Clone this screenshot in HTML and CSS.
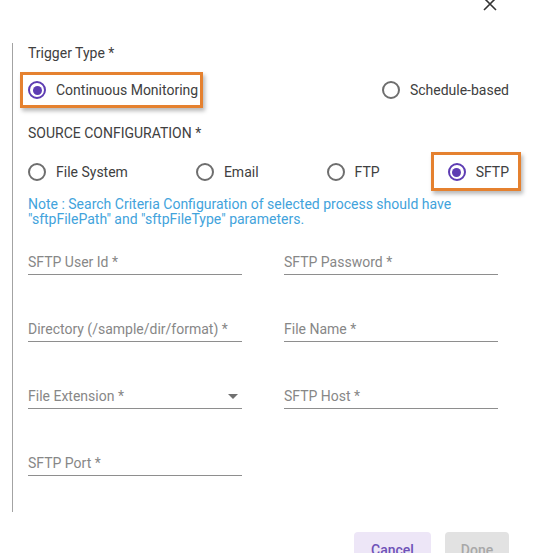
FILE: index.html
```html
<!DOCTYPE html>
<html>
<head>
<meta charset="utf-8">
<link rel="stylesheet" href="styles.css">
</head>
<body>
<div class="dialog">
  <div class="topbar">
    <button class="close" aria-label="Close">
      <svg width="14" height="14" viewBox="0 0 14 14"><path d="M1 1 L13 13 M13 1 L1 13" stroke="#333" stroke-width="1.6" fill="none"/></svg>
    </button>
  </div>
  <div class="content">
    <div class="group-label">Trigger Type *</div>
    <div class="trigger-row">
      <label class="radio checked hl hl-cm"><span class="circle"></span><span class="text">Continuous Monitoring</span></label>
      <label class="radio"><span class="circle"></span><span class="text">Schedule-based</span></label>
    </div>
    <div class="group-label section">SOURCE CONFIGURATION *</div>
    <div class="source-row">
      <label class="radio"><span class="circle"></span><span class="text">File System</span></label>
      <label class="radio"><span class="circle"></span><span class="text">Email</span></label>
      <label class="radio"><span class="circle"></span><span class="text">FTP</span></label>
      <label class="radio checked hl hl-sftp"><span class="circle"></span><span class="text">SFTP</span></label>
    </div>
    <p class="note">Note : Search Criteria Configuration of selected process should have<br>"sftpFilePath" and "sftpFileType" parameters.</p>
    <div class="fields">
      <div class="field"><span class="placeholder">SFTP User Id *</span></div>
      <div class="field"><span class="placeholder">SFTP Password *</span></div>
      <div class="field"><span class="placeholder">Directory (/sample/dir/format) *</span></div>
      <div class="field"><span class="placeholder">File Name *</span></div>
      <div class="field select"><span class="placeholder">File Extension *</span><span class="arrow"></span></div>
      <div class="field"><span class="placeholder">SFTP Host *</span></div>
      <div class="field"><span class="placeholder">SFTP Port *</span></div>
    </div>
  </div>
  <div class="actions">
    <button class="btn cancel">Cancel</button>
    <button class="btn done" disabled>Done</button>
  </div>
</div>
</body>
</html>
```

FILE: styles.css
```css
html, body {
  margin: 0;
  padding: 0;
  background: #ffffff;
  overflow: hidden;
  height: 553px;
}
body {
  font-family: Roboto, "Liberation Sans", Arial, sans-serif;
  font-size: 14px;
  color: #3a3a3a;
}
.dialog {
  width: 542px;
}
.topbar {
  height: 45px;
  display: flex;
  justify-content: flex-end;
  padding-right: 45px;
}
.close {
  border: none;
  background: none;
  padding: 0;
  margin-top: -3px;
  width: 14px;
  height: 14px;
  display: block;
}
.close svg { display: block; }
.content {
  margin-left: 12px;
  border-left: 1px solid #a3a3a3;
  padding-left: 15px;
  width: 481px;
  height: 469px;
  box-sizing: content-box;
}
.group-label {
  line-height: 20px;
  margin-top: -2px;
  color: #404040;
}
.group-label.section {
  margin-top: 13px;
}
.trigger-row {
  margin-top: 7px;
  height: 40px;
  display: flex;
  justify-content: space-between;
  align-items: center;
}
.source-row {
  margin-top: 9px;
  height: 40px;
  display: flex;
  align-items: center;
  gap: 68px;
}
.radio {
  position: relative;
  display: flex;
  align-items: center;
  gap: 10px;
  height: 40px;
  line-height: 20px;
  color: #404040;
}
.circle {
  width: 18px;
  height: 18px;
  box-sizing: border-box;
  border: 2px solid #6e6e6e;
  border-radius: 50%;
  display: flex;
  align-items: center;
  justify-content: center;
}
.radio.checked .circle {
  border-color: #5e3db3;
}
.radio.checked .circle::after {
  content: "";
  width: 9px;
  height: 9px;
  border-radius: 50%;
  background: #5e3db3;
}
.hl::before {
  content: "";
  position: absolute;
  border: 3px solid #e5812f;
  box-shadow: 2px 3px 4px rgba(0, 0, 0, 0.28);
  pointer-events: none;
}
.hl-cm::before {
  top: 2px;
  bottom: 2px;
  left: -8px;
  right: -5px;
}
.hl-sftp::before {
  top: 0;
  bottom: 1px;
  left: -17px;
  right: -12px;
}
.note {
  margin: 5px 0 0 0;
  font-size: 14px;
  line-height: 15px;
  color: #42a3dc;
}
.fields {
  margin-top: 25px;
  display: grid;
  grid-template-columns: 214px 214px;
  column-gap: 42px;
  row-gap: 44px;
}
.field {
  position: relative;
  height: 22px;
  border-bottom: 1px solid #8e8e8e;
  display: flex;
  align-items: flex-start;
}
.placeholder {
  line-height: 20px;
  color: #878787;
}
.select .arrow {
  margin-left: auto;
  margin-right: 4px;
  margin-top: 8px;
  width: 0;
  height: 0;
  border-left: 5px solid transparent;
  border-right: 5px solid transparent;
  border-top: 5px solid #707070;
}
.actions {
  margin-top: 20px;
  display: flex;
  justify-content: flex-end;
  gap: 14px;
  padding-right: 33px;
}
.btn {
  font-family: Roboto, "Liberation Sans", Arial, sans-serif;
  font-size: 14px;
  font-weight: 500;
  height: 36px;
  border: none;
  border-radius: 4px;
  padding: 0;
}
.cancel {
  width: 77px;
  background: #ede6f7;
  color: #6f52b8;
}
.done {
  width: 64px;
  background: #e2e2e2;
  color: #a8a8a8;
}
```
